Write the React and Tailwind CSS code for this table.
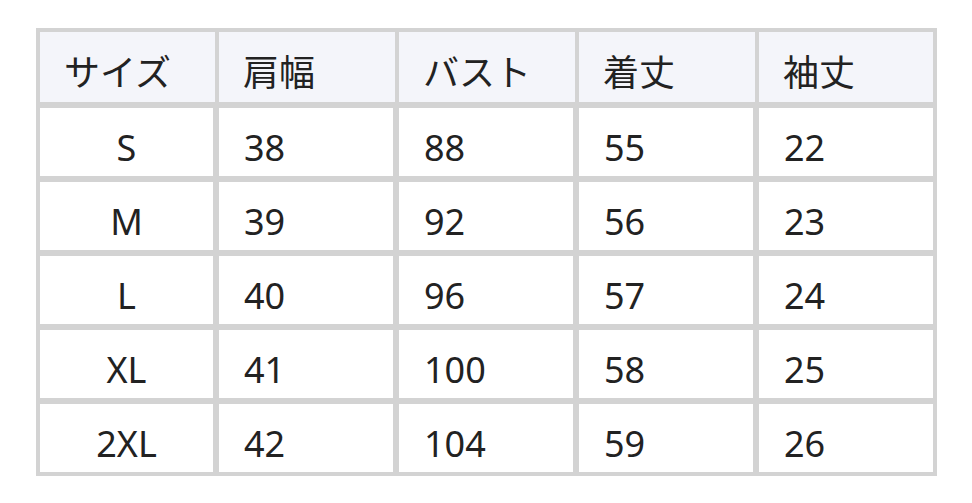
const headers = ["サイズ", "肩幅", "バスト", "着丈", "袖丈"];

const rows = [
  ["S", "38", "88", "55", "22"],
  ["M", "39", "92", "56", "23"],
  ["L", "40", "96", "57", "24"],
  ["XL", "41", "100", "58", "25"],
  ["2XL", "42", "104", "59", "26"],
];

export default function App() {
  return (
    <div
      className="w-[972px] h-[503px] bg-white pt-[28px] pl-[36px]"
      style={{ fontFamily: '"Noto Sans", "Noto Sans CJK JP", sans-serif' }}
    >
      <div className="w-[901px] bg-[#d3d3d3] p-[4px] text-[#222] text-[36px] leading-none">
        {/* header row */}
        <div className="grid grid-cols-[175px_176px_176px_176px_174px] gap-x-[4px]">
          {headers.map((h) => (
            <div key={h} className="h-[70px] bg-[#f4f5fa] flex items-center pl-[24px] pt-[12px]">
              {h}
            </div>
          ))}
        </div>

        {/* body rows */}
        <div className="mt-[6px] grid grid-cols-[173px_174px_174px_174px_174px] gap-x-[6px] gap-y-[6px]">
          {rows.map((r) =>
            r.map((c, i) => (
              <div
                key={r[0] + i}
                className={
                  i === 0
                    ? "h-[68px] bg-white flex items-center justify-center pt-[12px]"
                    : "h-[68px] bg-white flex items-center pl-[25px] pt-[12px]"
                }
              >
                {c}
              </div>
            ))
          )}
        </div>
      </div>
    </div>
  );
}
